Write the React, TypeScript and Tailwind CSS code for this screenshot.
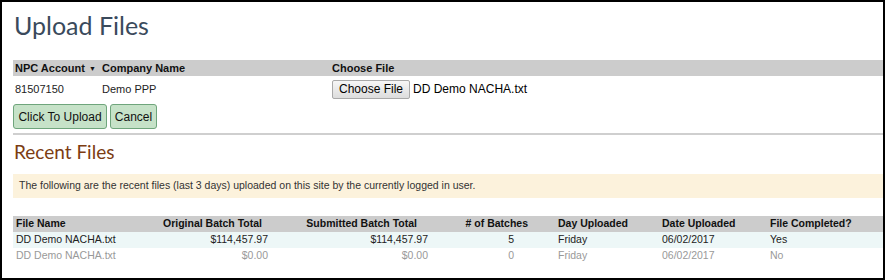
const files = [
  {
    name: "DD Demo NACHA.txt",
    original: "$114,457.97",
    submitted: "$114,457.97",
    batches: "5",
    day: "Friday",
    date: "06/02/2017",
    done: "Yes",
    muted: false,
  },
  {
    name: "DD Demo NACHA.txt",
    original: "$0.00",
    submitted: "$0.00",
    batches: "0",
    day: "Friday",
    date: "06/02/2017",
    done: "No",
    muted: true,
  },
];

const cols = "grid grid-cols-[137px_118px_160px_100px_134px_108px_1fr]";

export default function App() {
  return (
    <div className="w-[885px] h-[280px] bg-white border-2 border-black overflow-hidden font-['Liberation_Sans',Arial,sans-serif]">
      <div className="pl-[11px]">
        {/* Upload */}
        <div className="h-[58px] pt-[8px]">
          <h1 className="font-['Lato',sans-serif] text-[25px] leading-[30px] text-[#3a4a5c] pl-[1px]">
            Upload Files
          </h1>
        </div>

        <div className="grid grid-cols-[89px_230px_1fr] h-[16px] items-center bg-[#cccccc] text-[11px] font-bold text-[#111]">
          <div className="pl-[2px] flex items-center gap-[4px]">
            NPC Account
            <span className="text-[7px] leading-none">▼</span>
          </div>
          <div>Company Name</div>
          <div>Choose File</div>
        </div>

        <div className="grid grid-cols-[89px_230px_1fr] h-[26px] items-center text-[11px] text-[#222]">
          <div className="pl-[2px]">81507150</div>
          <div>Demo PPP</div>
          <div className="flex items-center gap-[3px] text-[12px]">
            <button className="h-[19px] px-[6px] bg-gradient-to-b from-[#f6f6f6] to-[#dddddd] border border-[#a9a9a9] rounded-[2px] text-[12px] text-black leading-none">
              Choose File
            </button>
            <span className="text-black">DD Demo NACHA.txt</span>
          </div>
        </div>

        <div className="flex gap-[3px] mt-[2px]">
          <button className="h-[25px] w-[94px] bg-[#c6e2c8] border border-[#6fa57c] rounded-[3px] text-[12px] text-[#111]">
            Click To Upload
          </button>
          <button className="h-[25px] w-[47px] bg-[#c6e2c8] border border-[#6fa57c] rounded-[3px] text-[12px] text-[#111]">
            Cancel
          </button>
        </div>

        <div className="mt-[4px] h-[2px] bg-[#cfcfcf]" />

        {/* Recent files */}
        <h2 className="mt-[5px] font-['Lato',sans-serif] text-[19px] leading-[24px] text-[#7c3c12] pl-[1px]">
          Recent Files
        </h2>

        <div className="mt-[10px] h-[24px] flex items-center bg-[#fcf2dc] pl-[6px] text-[10.5px] text-[#333]">
          The following are the recent files (last 3 days) uploaded on this site by the currently logged in user.
        </div>

        <div className="mt-[18px] text-[10.5px]">
          <div className={`${cols} h-[16px] items-center bg-[#cccccc] font-bold text-[#111]`}>
            <div className="pl-[3px]">File Name</div>
            <div className="text-right pr-[6px]">Original Batch Total</div>
            <div className="text-right pr-[11px]">Submitted Batch Total</div>
            <div className="text-right">
              # of Batches
            </div>
            <div className="pl-[30px]">Day Uploaded</div>
            <div>Date Uploaded</div>
            <div>File Completed?</div>
          </div>
          {files.map((f, i) => (
            <div
              key={i}
              className={`${cols} h-[16px] items-center ${
                f.muted ? "text-[#999999]" : "bg-[#edf7f7] text-[#222]"
              }`}
            >
              <div className="pl-[3px]">{f.name}</div>
              <div className="text-right">{f.original}</div>
              <div className="text-right">{f.submitted}</div>
              <div className="text-right pr-[14px]">{f.batches}</div>
              <div className="pl-[30px]">{f.day}</div>
              <div>{f.date}</div>
              <div>{f.done}</div>
            </div>
          ))}
        </div>
      </div>
    </div>
  );
}
